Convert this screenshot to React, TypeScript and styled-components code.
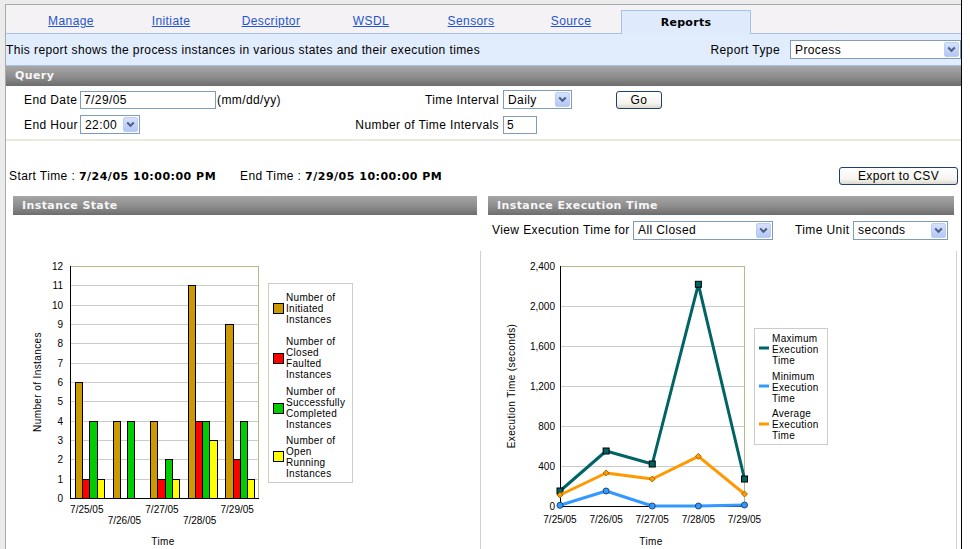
import React from 'react';
import styled, { createGlobalStyle } from 'styled-components';

const GlobalStyle = createGlobalStyle`
  html, body {
    margin: 0;
    padding: 0;
    background: #fff;
  }
  body {
    font-family: 'Liberation Sans', Arial, sans-serif;
    font-size: 12px;
    letter-spacing: 0.4px;
    color: #000;
  }
`;

const Page = styled.div`
  width: 956px;
  padding: 4px 0 0 5px;
  background: #ebebeb;
  border-right: 1px solid #000;
`;

const Frame = styled.div`
  background: #fff;
  border-left: 1px solid #a9a9a9;
  border-top: 1px solid #a9a9a9;
  min-height: 560px;
`;

const TabBar = styled.div`
  height: 28px;
  display: flex;
  align-items: flex-end;
  padding-left: 15px;
  background: #f4f2f4;
  border-bottom: 1px solid #a9c1e9;
`;

const TabLink = styled.a`
  width: 100px;
  align-self: stretch;
  display: flex;
  align-items: center;
  justify-content: center;
  padding-top: 4px;
  box-sizing: border-box;
  color: #2455cc;
  text-decoration: underline;
  cursor: pointer;
`;

const ActiveTab = styled.div`
  width: 130px;
  height: 24px;
  box-sizing: border-box;
  margin-bottom: -1px;
  display: flex;
  align-items: center;
  justify-content: center;
  background: #dfeafc;
  border: 1px solid #a9c1e9;
  border-bottom: none;
  font-family: 'DejaVu Sans', Verdana, sans-serif;
  font-weight: bold;
  font-size: 11px;
  letter-spacing: 0.3px;
`;

const DescRow = styled.div`
  height: 31px;
  display: flex;
  align-items: center;
  justify-content: space-between;
  background: #e1ecfd;
  border-bottom: 1px solid #a9c1e9;
`;

const Inline = styled.div`
  display: flex;
  align-items: center;
`;

const Label = styled.span<{ $w?: number; $right?: boolean }>`
  white-space: nowrap;
  ${(p) => (p.$w ? `width: ${p.$w}px; flex: none;` : '')}
  ${(p) => (p.$right ? 'text-align: right;' : '')}
`;

const GapLabel = styled.span`
  margin-right: 10px;
  white-space: nowrap;
`;

const SectionBar = styled.div`
  height: 20px;
  line-height: 20px;
  padding-left: 9px;
  background: linear-gradient(#a6a6a6, #8c8c8c 55%, #6d6d6d);
  color: #f6f6f6;
  font-family: 'DejaVu Sans', Verdana, sans-serif;
  font-weight: bold;
  font-size: 11px;
  letter-spacing: 0.4px;
`;

const PanelHeader = styled(SectionBar)<{ $ml: number }>`
  height: 19px;
  line-height: 19px;
  margin: 0 3px 0 ${(p) => p.$ml}px;
`;

const QueryForm = styled.div`
  display: grid;
  grid-template-columns: 56px 270px 149px 117px auto;
  grid-auto-rows: 19px;
  row-gap: 6px;
  align-items: center;
  padding: 4px 0 5px 18px;
  border-bottom: 2px solid #ebe8dc;
`;

const Field = styled.div<{ $ml?: number }>`
  display: flex;
  align-items: center;
  margin-left: ${(p) => p.$ml || 0}px;
`;

const TextInput = styled.input<{ $w: number }>`
  width: ${(p) => p.$w}px;
  height: 18px;
  box-sizing: border-box;
  border: 1px solid #7f9db9;
  padding: 0 3px;
  margin: 0;
  font-family: 'Liberation Sans', Arial, sans-serif;
  font-size: 12px;
  letter-spacing: 0.4px;
  color: #000;
  outline: none;
`;

const Hint = styled.span`
  margin-left: 1px;
`;

const Combo = styled.div<{ $w: number }>`
  width: ${(p) => p.$w}px;
  height: 19px;
  box-sizing: border-box;
  flex: none;
  display: flex;
  align-items: center;
  border: 1px solid #7f9db9;
  background: #fff;
  padding-left: 4px;
`;

const ComboValue = styled.span`
  flex: 1;
  white-space: nowrap;
  overflow: hidden;
`;

const ComboArrow = styled.span`
  width: 15px;
  height: 15px;
  margin-right: 1px;
  box-sizing: border-box;
  display: flex;
  align-items: center;
  justify-content: center;
  border: 1px solid #bccdf4;
  border-radius: 2px;
  background: linear-gradient(#d6e1fc, #b4c7f6);
`;

const XpButton = styled.button<{ $w: number }>`
  width: ${(p) => p.$w}px;
  height: 18px;
  padding: 0;
  margin: 0;
  box-sizing: border-box;
  border: 1px solid #1f3f6e;
  border-radius: 3px;
  background: linear-gradient(#ffffff, #f5f4ef 70%, #dcd8cc);
  font-family: 'Liberation Sans', Arial, sans-serif;
  font-size: 12px;
  letter-spacing: 0.4px;
  color: #000;
`;

const SummaryRow = styled.div`
  margin-top: 25px;
  height: 19px;
  display: flex;
  align-items: center;
  justify-content: space-between;
  padding: 0 3px;
`;

const TimeSpan = styled.span<{ $w?: number }>`
  display: inline-block;
  white-space: nowrap;
  ${(p) => (p.$w ? `width: ${p.$w}px;` : '')}
`;

const Strong = styled.b`
  font-family: 'DejaVu Sans', Verdana, sans-serif;
  font-size: 11px;
  letter-spacing: 0.5px;
`;

const PanelGrid = styled.div`
  margin-top: 11px;
  display: grid;
  grid-template-columns: 474px 477px;
  grid-template-rows: 19px 36px auto;
`;

const FilterRow = styled.div`
  display: flex;
  align-items: flex-start;
  padding: 6px 0 0 12px;
  line-height: 19px;
`;

const ChartCell = styled.div<{ $sep?: boolean }>`
  height: 300px;
  box-sizing: border-box;
  ${(p) => (p.$sep ? 'border-left: 1px solid #cfcfcf; border-right: 1px solid #cfcfcf;' : '')}
`;

const ChartSvg = styled.svg`
  display: block;
  text {
    font-family: 'Liberation Sans', Arial, sans-serif;
    font-size: 10px;
    letter-spacing: 0;
    fill: #000;
  }
  .legend {
    letter-spacing: 0.3px;
  }
  .axis-title {
    letter-spacing: 0.4px;
  }
`;

function Chevron() {
  return (
    <svg width="9" height="7" viewBox="0 0 9 7">
      <path d="M1.2 1.5 L4.5 4.8 L7.8 1.5" fill="none" stroke="#4d6185" strokeWidth="2" />
    </svg>
  );
}

function Select({ value, width }: { value: string; width: number }) {
  return (
    <Combo $w={width}>
      <ComboValue>{value}</ComboValue>
      <ComboArrow>
        <Chevron />
      </ComboArrow>
    </Combo>
  );
}

const DATES = ['7/25/05', '7/26/05', '7/27/05', '7/28/05', '7/29/05'];

const BAR_DATA = [
  [6, 1, 4, 1],
  [4, 0, 4, 0],
  [4, 1, 2, 1],
  [11, 4, 4, 3],
  [9, 2, 4, 1],
];
const BAR_COLORS = ['#cc9900', '#ff0000', '#00cc00', '#ffff00'];

const BAR_LEGEND = [
  { color: BAR_COLORS[0], lines: ['Number of', 'Initiated', 'Instances'], top: 46, swatch: 57 },
  { color: BAR_COLORS[1], lines: ['Number of', 'Closed', 'Faulted', 'Instances'], top: 90, swatch: 107 },
  { color: BAR_COLORS[2], lines: ['Number of', 'Successfully', 'Completed', 'Instances'], top: 140, swatch: 157 },
  { color: BAR_COLORS[3], lines: ['Number of', 'Open', 'Running', 'Instances'], top: 189, swatch: 205 },
];

function InstanceStateChart() {
  const x0 = 64;
  const x1 = 252;
  const y0 = 247;
  const y1 = 15;
  const unit = (y0 - y1) / 12;
  const slot = (x1 - x0) / 5;
  const ticks = Array.from({ length: 13 }, (_, i) => i);

  return (
    <ChartSvg width="474" height="300">
      {ticks.slice(1, 12).map((k) => (
        <line key={k} x1={x0} x2={x1} y1={Math.round(y0 - k * unit) + 0.5} y2={Math.round(y0 - k * unit) + 0.5} stroke="#cccccc" />
      ))}
      <line x1={x0} x2={x1} y1={y1 + 0.5} y2={y1 + 0.5} stroke="#bdb68a" />
      <line x1={x1 + 0.5} x2={x1 + 0.5} y1={y1} y2={y0} stroke="#bdb68a" />

      {BAR_DATA.map((group, i) =>
        group.map((v, j) => {
          if (!v) return null;
          const bx = Math.round(x0 + i * slot + 5 + j * 7.2);
          const bw = Math.round(x0 + i * slot + 5 + (j + 1) * 7.2) - bx;
          const top = Math.round(y0 - v * unit);
          return (
            <rect
              key={`${i}-${j}`}
              x={bx + 0.5}
              y={top + 0.5}
              width={bw}
              height={y0 - top}
              fill={BAR_COLORS[j]}
              stroke="#000"
              strokeWidth="1"
            />
          );
        })
      )}

      <line x1={x0 + 0.5} x2={x0 + 0.5} y1={y1} y2={y0 + 1} stroke="#000" />
      <line x1={x0} x2={x1 + 1} y1={y0 + 0.5} y2={y0 + 0.5} stroke="#000" />

      {ticks.map((k) => (
        <text key={k} x={57} y={Math.round(y0 - k * unit) + 4} textAnchor="end">
          {k}
        </text>
      ))}
      {DATES.map((d, i) => (
        <text key={d} x={x0 + slot * (i + 0.5) - 2} y={i % 2 === 0 ? 262 : 273} textAnchor="middle">
          {d}
        </text>
      ))}
      <text x={157} y={294} textAnchor="middle" className="axis-title">
        Time
      </text>
      <text x={0} y={0} textAnchor="middle" className="axis-title" transform="translate(35 131) rotate(-90)">
        Number of Instances
      </text>

      <rect x={262.5} y={32.5} width={84} height={199} fill="#fff" stroke="#cccccc" />
      {BAR_LEGEND.map((item) => (
        <g key={item.lines.join('')}>
          <rect x={267.5} y={item.swatch - 4.5} width={10} height={10} fill={item.color} stroke="#000" />
          {item.lines.map((line, n) => (
            <text key={n} x={280} y={item.top + n * 11 + 3.5} className="legend">
              {line}
            </text>
          ))}
        </g>
      ))}
    </ChartSvg>
  );
}

const SERIES = [
  { name: 'Maximum', color: '#006464', values: [150, 550, 420, 2217, 270], marker: 'square', top: 87, swatch: 97 },
  { name: 'Minimum', color: '#3399ff', values: [7, 150, 0, 0, 10], marker: 'circle', top: 125, swatch: 135 },
  { name: 'Average', color: '#ff9900', values: [110, 330, 270, 497, 120], marker: 'diamond', top: 162, swatch: 173 },
];

function ExecutionTimeChart() {
  const x0 = 79;
  const x1 = 263.5;
  const y0 = 255;
  const y1 = 15;
  const px = (i: number) => x0 + (i * (x1 - x0)) / 4;
  const py = (v: number) => y0 - v * 0.1;
  const labels = ['0', '400', '800', '1,200', '1,600', '2,000', '2,400'];

  const marker = (kind: string, x: number, y: number, color: string, key: number) => {
    if (kind === 'square') {
      return <rect key={key} x={x - 3} y={y - 3} width={6} height={6} fill={color} stroke="#000" strokeWidth="1" />;
    }
    if (kind === 'circle') {
      return <circle key={key} cx={x} cy={y} r={3} fill={color} stroke="#1f4a73" strokeWidth="1" />;
    }
    return (
      <polygon
        key={key}
        points={`${x},${y - 3} ${x + 3},${y} ${x},${y + 3} ${x - 3},${y}`}
        fill={color}
        stroke="#8a5a00"
        strokeWidth="0.8"
      />
    );
  };

  return (
    <ChartSvg width="475" height="300">
      {[1, 2, 3, 4, 5].map((k) => (
        <line key={k} x1={x0} x2={x1} y1={y0 - k * 40 + 0.5} y2={y0 - k * 40 + 0.5} stroke="#cccccc" />
      ))}
      <line x1={x0} x2={x1} y1={y1 + 0.5} y2={y1 + 0.5} stroke="#bdb68a" />
      <line x1={x1} x2={x1} y1={y1} y2={y0} stroke="#bdb68a" />
      <line x1={x0 + 0.5} x2={x0 + 0.5} y1={y1} y2={y0 + 1} stroke="#000" />
      <line x1={x0} x2={x1} y1={y0 + 0.5} y2={y0 + 0.5} stroke="#000" />

      {SERIES.map((s) => (
        <g key={s.name}>
          <polyline
            points={s.values.map((v, i) => `${px(i)},${py(v)}`).join(' ')}
            fill="none"
            stroke={s.color}
            strokeWidth="3"
            strokeLinejoin="round"
          />
          {s.values.map((v, i) => marker(s.marker, px(i), py(v), s.color, i))}
        </g>
      ))}

      {labels.map((l, k) => (
        <text key={l} x={74} y={y0 - k * 40 + 4} textAnchor="end">
          {l}
        </text>
      ))}
      {DATES.map((d, i) => (
        <text key={d} x={px(i)} y={272} textAnchor="middle">
          {d}
        </text>
      ))}
      <text x={170} y={294} textAnchor="middle" className="axis-title">
        Time
      </text>
      <text x={0} y={0} textAnchor="middle" className="axis-title" transform="translate(34 135) rotate(-90)">
        Execution Time (seconds)
      </text>

      <rect x={273.5} y={77.5} width={73} height={116} fill="#fff" stroke="#cccccc" />
      {SERIES.map((s) => (
        <g key={s.name}>
          <line x1={278} x2={288} y1={s.swatch} y2={s.swatch} stroke={s.color} strokeWidth="3" />
          {[s.name, 'Execution', 'Time'].map((line, n) => (
            <text key={n} x={291} y={s.top + n * 11 + 3.5} className="legend">
              {line}
            </text>
          ))}
        </g>
      ))}
    </ChartSvg>
  );
}

const TABS = ['Manage', 'Initiate', 'Descriptor', 'WSDL', 'Sensors', 'Source'];

export default function App() {
  return (
    <>
      <GlobalStyle />
      <Page>
        <Frame>
          <TabBar>
            {TABS.map((t) => (
              <TabLink key={t}>{t}</TabLink>
            ))}
            <ActiveTab>Reports</ActiveTab>
          </TabBar>

          <DescRow>
            <span>This report shows the process instances in various states and their execution times</span>
            <Inline>
              <GapLabel>Report Type</GapLabel>
              <Select value="Process" width={171} />
            </Inline>
          </DescRow>

          <SectionBar>Query</SectionBar>
          <QueryForm>
            <Label>End Date</Label>
            <Field>
              <TextInput $w={136} defaultValue="7/29/05" />
              <Hint>(mm/dd/yy)</Hint>
            </Field>
            <Label $right>Time Interval</Label>
            <Field $ml={4}>
              <Select value="Daily" width={69} />
            </Field>
            <Field>
              <XpButton $w={46}>Go</XpButton>
            </Field>

            <Label>End Hour</Label>
            <Field>
              <Select value="22:00" width={60} />
            </Field>
            <Label $right>Number of Time Intervals</Label>
            <Field $ml={4}>
              <TextInput $w={34} defaultValue="5" />
            </Field>
            <span />
          </QueryForm>

          <SummaryRow>
            <Inline>
              <TimeSpan $w={231}>
                Start Time : <Strong>7/24/05 10:00:00 PM</Strong>
              </TimeSpan>
              <TimeSpan>
                End Time : <Strong>7/29/05 10:00:00 PM</Strong>
              </TimeSpan>
            </Inline>
            <XpButton $w={119}>Export to CSV</XpButton>
          </SummaryRow>

          <PanelGrid>
            <PanelHeader $ml={7}>Instance State</PanelHeader>
            <PanelHeader $ml={8}>Instance Execution Time</PanelHeader>
            <div />
            <FilterRow>
              <Label $w={141}>View Execution Time for</Label>
              <Select value="All Closed" width={140} />
              <Label $w={58} style={{ marginLeft: 22 }}>
                Time Unit
              </Label>
              <Select value="seconds" width={95} />
            </FilterRow>
            <ChartCell>
              <InstanceStateChart />
            </ChartCell>
            <ChartCell $sep>
              <ExecutionTimeChart />
            </ChartCell>
          </PanelGrid>
        </Frame>
      </Page>
    </>
  );
}
